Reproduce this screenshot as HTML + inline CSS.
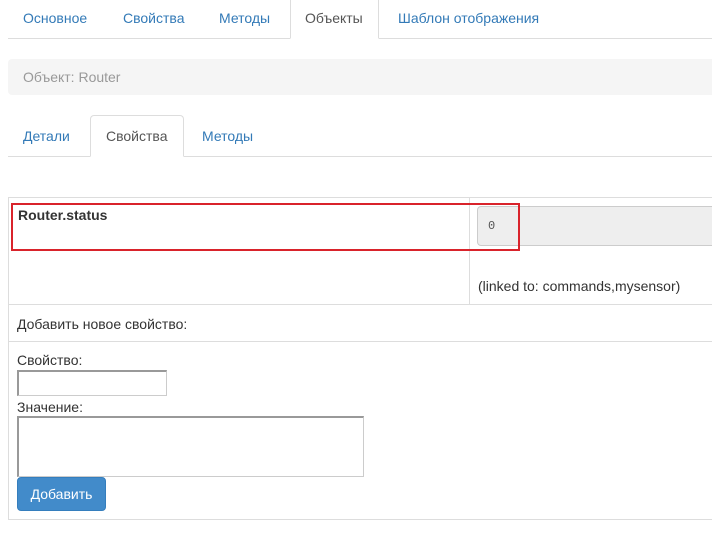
<!DOCTYPE html>
<html><head><meta charset="utf-8"><style>
body{margin:0;width:712px;height:540px;background:#fff;font-family:"Liberation Sans",sans-serif;font-size:14px;color:#333;position:relative;overflow:hidden}
.a{position:absolute}
.t{color:#337ab7}
.ln{position:absolute;background:#ddd}
</style></head><body>
<div class="ln" style="left:8px;top:38px;width:704px;height:1px"></div>
<div class="a" style="left:290px;top:-2px;width:89px;height:41px;border:1px solid #ddd;border-bottom-color:#fff;background:#fff;box-sizing:border-box"></div>
<div class="a t" style="left:23px;top:10px">Основное</div>
<div class="a t" style="left:123px;top:10px">Свойства</div>
<div class="a t" style="left:219px;top:10px">Методы</div>
<div class="a" style="left:305px;top:10px;color:#555">Объекты</div>
<div class="a t" style="left:398px;top:10px">Шаблон отображения</div>

<div class="a" style="left:8px;top:59px;width:704px;height:36px;background:#f5f5f5;border-radius:4px 0 0 4px"></div>
<div class="a" style="left:23px;top:69px;color:#999">Объект: Router</div>

<div class="ln" style="left:8px;top:156px;width:704px;height:1px"></div>
<div class="a" style="left:90px;top:115px;width:94px;height:42px;border:1px solid #ddd;border-bottom-color:#fff;background:#fff;box-sizing:border-box;border-radius:4px 4px 0 0"></div>
<div class="a t" style="left:23px;top:128px">Детали</div>
<div class="a" style="left:106px;top:128px;color:#555">Свойства</div>
<div class="a t" style="left:202px;top:128px">Методы</div>

<div class="ln" style="left:8px;top:197px;width:704px;height:1px"></div>
<div class="ln" style="left:8px;top:197px;width:1px;height:323px"></div>
<div class="ln" style="left:469px;top:197px;width:1px;height:107px"></div>
<div class="ln" style="left:8px;top:304px;width:704px;height:1px"></div>
<div class="ln" style="left:8px;top:341px;width:704px;height:1px"></div>
<div class="ln" style="left:8px;top:519px;width:704px;height:1px"></div>
<div class="a" style="left:18px;top:207px;font-weight:bold">Router.status</div>
<div class="a" style="left:477px;top:206px;width:240px;height:40px;background:#eee;border:1px solid #ccc;border-radius:4px;box-sizing:border-box"></div>
<div class="a" style="left:488px;top:219px;font-family:'Liberation Mono',monospace;font-size:12px;color:#555">0</div>
<div class="a" style="left:478px;top:278px">(linked to: commands,mysensor)</div>
<div class="a" style="left:11px;top:203px;width:509px;height:48px;border:2px solid #d9232b;box-sizing:border-box"></div>
<div class="a" style="left:17px;top:316px">Добавить новое свойство:</div>
<div class="a" style="left:17px;top:352px">Свойство:</div>
<div class="a" style="left:17px;top:370px;width:150px;height:26px;border:1px solid #ccc;border-top:2px solid #999;border-left:2px solid #999;box-sizing:border-box"></div>
<div class="a" style="left:17px;top:399px">Значение:</div>
<div class="a" style="left:17px;top:416px;width:347px;height:61px;border:1px solid #ccc;border-top:2px solid #999;border-left:2px solid #999;box-sizing:border-box"></div>
<div class="a" style="left:17px;top:477px;width:89px;height:34px;background:#428bca;border:1px solid #357ebd;border-radius:4px;box-sizing:border-box;color:#fff;text-align:center;line-height:32px">Добавить</div>
</body></html>
